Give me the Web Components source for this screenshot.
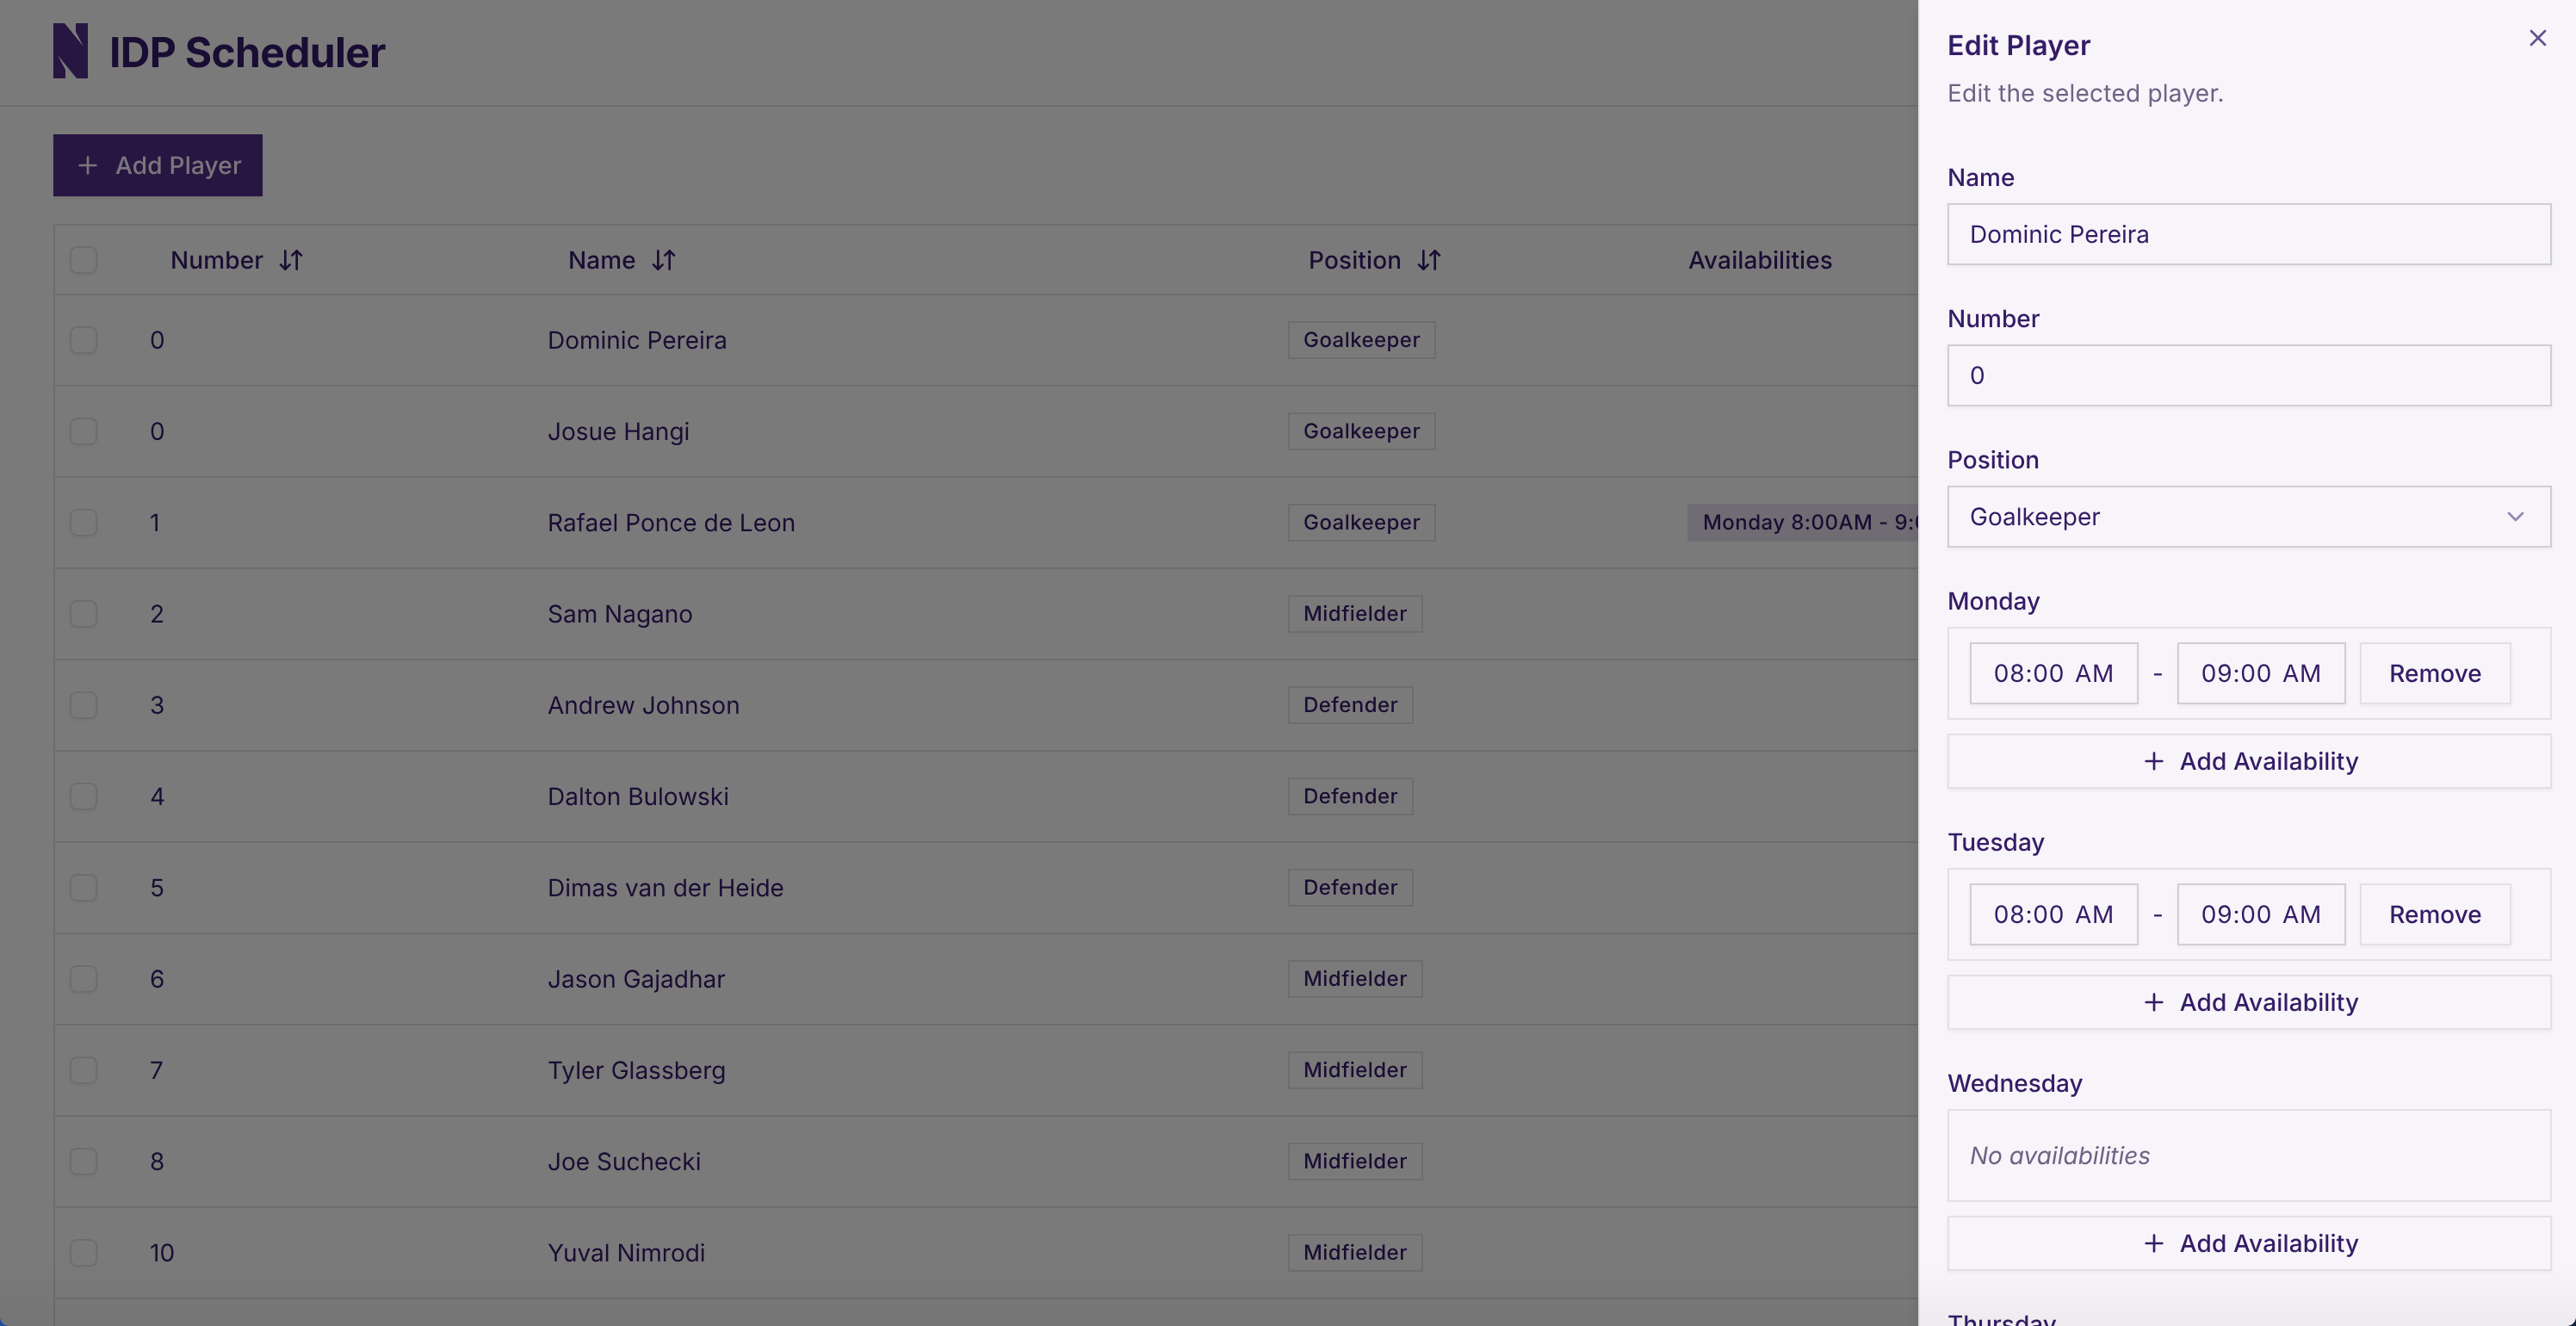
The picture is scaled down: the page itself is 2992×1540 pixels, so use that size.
<!DOCTYPE html>
<html lang="en"><head><meta charset="utf-8"><title>IDP Scheduler</title>
<style>
html,body{margin:0;padding:0;height:100%;overflow:hidden;background:#f6f5f7}
body{font-family:Inter,"Liberation Sans",sans-serif;color:#341c66;font-size:28px;text-rendering:geometricPrecision}
</style></head><body>
<idp-app>
  <app-header slot="header"></app-header>
  <add-button slot="action">Add Player</add-button>
  <player-table slot="table">
    <player-row num="0" name="Dominic Pereira" pos="Goalkeeper"></player-row>
    <player-row num="0" name="Josue Hangi" pos="Goalkeeper"></player-row>
    <player-row num="1" name="Rafael Ponce de Leon" pos="Goalkeeper"><ui-badge soft>Monday 8:00AM - 9:00AM</ui-badge></player-row>
    <player-row num="2" name="Sam Nagano" pos="Midfielder"></player-row>
    <player-row num="3" name="Andrew Johnson" pos="Defender"></player-row>
    <player-row num="4" name="Dalton Bulowski" pos="Defender"></player-row>
    <player-row num="5" name="Dimas van der Heide" pos="Defender"></player-row>
    <player-row num="6" name="Jason Gajadhar" pos="Midfielder"></player-row>
    <player-row num="7" name="Tyler Glassberg" pos="Midfielder"></player-row>
    <player-row num="8" name="Joe Suchecki" pos="Midfielder"></player-row>
    <player-row num="10" name="Yuval Nimrodi" pos="Midfielder"></player-row>
    <player-row></player-row>
  </player-table>
</idp-app>
<dim-overlay></dim-overlay>
<edit-drawer>
  <form-field label="Name"><text-box>Dominic Pereira</text-box></form-field>
  <form-field label="Number"><text-box>0</text-box></form-field>
  <form-field label="Position"><text-box select>Goalkeeper</text-box></form-field>
  <day-field label="Monday"><time-slot start="08:00 AM" end="09:00 AM"></time-slot></day-field>
  <day-field label="Tuesday"><time-slot start="08:00 AM" end="09:00 AM"></time-slot></day-field>
  <day-field label="Wednesday"><empty-note>No availabilities</empty-note></day-field>
  <form-field label="Thursday"></form-field>
</edit-drawer>
<window-edge></window-edge>
<script>
const ICONS={
  plus:'<path d="M5 12h14"/><path d="M12 5v14"/>',
  sort:'<path d="m3 16 4 4 4-4"/><path d="M7 20V4"/><path d="m21 8-4-4-4 4"/><path d="M17 4v16"/>',
  x:'<path d="M18 6 6 18"/><path d="m6 6 12 12"/>',
  chevron:'<path d="m6 9 6 6 6-6"/>'
};
class Base extends HTMLElement{
  constructor(){super();this.attachShadow({mode:'open'})}
  connectedCallback(){this.shadowRoot.innerHTML='<style>'+this.constructor.css+'</style>'+this.view()}
  a(n){return this.getAttribute(n)||''}
  view(){return '<slot></slot>'}
}
function def(name,css,view){
  const C=class extends Base{};
  C.css=css;
  if(view)C.prototype.view=view;
  customElements.define(name,C);
}
def('ui-icon',':host{display:block;width:32px;height:32px;flex:none}svg{display:block;width:32px;height:32px;fill:none;stroke:currentColor;stroke-width:2;stroke-linecap:round;stroke-linejoin:round}',
  function(){return '<svg viewBox="0 0 24 24" aria-hidden="true">'+ICONS[this.a('name')]+'</svg>'});
def('idp-app',':host{display:flex;flex-direction:column;height:1540px;overflow:hidden;will-change:transform}.act{display:flex;flex:none;padding:32px 62px}.tbl{flex:none;padding:0 62px}',
  ()=>'<slot name="header"></slot><div class="act"><slot name="action"></slot></div><div class="tbl"><slot name="table"></slot></div>');
def('app-header',':host{display:flex;flex:none;align-items:center;gap:25px;height:122px;padding:0 62px;border-bottom:2px solid #dbd8df;box-sizing:content-box;color:#321a66}svg{display:block;width:40px;height:64px;fill:#4e2a84;margin-top:-4px}h1{margin:0;font:700 48px/60px Inter,sans-serif;letter-spacing:-.7px}',
  ()=>'<svg viewBox="0 0 40 64" aria-label="Logo"><path d="M0 0H13L35 27L26 10V0H40V64H27L5 37L14 54V64H0Z"/></svg><h1>IDP Scheduler</h1>');
def('add-button',':host{display:flex;align-items:center;height:72px;padding:0 24px;gap:16px;background:#4e2a84;color:#f2eff7;font:500 28px/40px Inter,sans-serif;letter-spacing:.2px;box-sizing:border-box;box-shadow:0 2px 4px rgba(0,0,0,.1)}ui-icon{color:#f2eff7}',
  ()=>'<ui-icon name="plus"></ui-icon><slot></slot>');
const GRID='display:grid;grid-template-columns:94px 462px 860px 464px 1fr;align-items:center;';
def('player-table',`:host{display:block;border:2px solid #dbd8df;border-bottom:0;color:#341a66}
.head{${GRID}height:79px;border-bottom:2px solid #dbd8df;font-weight:500;letter-spacing:.12px}
.c{padding-left:17px;display:flex}.h{display:flex;align-items:center;gap:16px;padding-left:40px}.h.s{padding-left:17px}`,
  ()=>`<div class="head"><div class="c"><ui-check></ui-check></div>
  <div class="h">Number<ui-icon name="sort"></ui-icon></div>
  <div class="h">Name<ui-icon name="sort"></ui-icon></div>
  <div class="h">Position<ui-icon name="sort"></ui-icon></div>
  <div class="h s">Availabilities</div></div><slot></slot>`);
def('ui-check',':host{display:block;width:32px;height:32px;box-sizing:border-box;border:2px solid #dcd9e0;border-radius:8px;box-shadow:0 2px 4px rgba(0,0,0,.05)}',()=>'');
def('ui-badge',`:host{display:inline-flex;align-items:center;height:44px;box-sizing:border-box;padding:0 16px;border:2px solid #dcd9e0;font:500 24px/32px Inter,sans-serif;letter-spacing:.45px;white-space:nowrap}
:host([soft]){background:#dfdae6;border-color:transparent}`);
def('player-row',`:host{${GRID}height:104px;border-bottom:2px solid #dbd8df}
.c{padding-left:17px;display:flex}.p{padding-left:16px}.av{padding-left:16px;display:flex;gap:8px}`,
  function(){
    if(!this.hasAttribute('num'))return '';
    return `<div class="c"><ui-check></ui-check></div><div class="p">${this.a('num')}</div><div class="p">${this.a('name')}</div><div class="p"><ui-badge>${this.a('pos')}</ui-badge></div><div class="av"><slot></slot></div>`;
  });
def('dim-overlay',':host{position:fixed;inset:0;background:rgba(0,0,0,.5)}',()=>'');
def('edit-drawer',`:host{position:fixed;top:0;right:0;bottom:0;width:764px;box-sizing:border-box;padding:32px 28px 0 32px;border-left:2px solid #e6e3ea;background:#f7f5f9;overflow:hidden;color:#341c66;box-shadow:0 10px 15px rgba(0,0,0,.1)}
h2{margin:0;font:600 32px/42px Inter,sans-serif;letter-spacing:.3px}
p{margin:14px 0 64px;font:400 28px/40px Inter,sans-serif;letter-spacing:.24px;color:#6e6285}
.x{position:absolute;top:28px;right:28px;color:#65518f}
.f{display:flex;flex-direction:column;gap:48px}`,
  ()=>'<h2>Edit Player</h2><p>Edit the selected player.</p><ui-icon class="x" name="x"></ui-icon><div class="f"><slot></slot></div>');
def('form-field',':host{display:flex;flex-direction:column;gap:16px}label{font:500 28px/28px Inter,sans-serif;display:block}',
  function(){return `<label>${this.a('label')}</label><slot></slot>`});
def('text-box',`:host{display:flex;align-items:center;justify-content:space-between;height:72px;box-sizing:border-box;padding:0 24px;border:2px solid #d0cdd6;font:400 28px/40px Inter,sans-serif;box-shadow:0 2px 4px rgba(0,0,0,.05)}
ui-icon{opacity:.5}`,
  function(){return '<span><slot></slot></span>'+(this.hasAttribute('select')?'<ui-icon name="chevron"></ui-icon>':'')});
def('day-field',`:host{display:flex;flex-direction:column;gap:16px}label{font:500 28px/28px Inter,sans-serif;display:block}
.box{display:flex;flex-direction:column;justify-content:center;min-height:108px;box-sizing:border-box;padding:16px 24px;border:2px solid #e2dfe8}
.add{display:flex;align-items:center;justify-content:center;gap:14px;height:64px;box-sizing:border-box;border:2px solid #e2dfe8;font:500 28px/40px Inter,sans-serif;letter-spacing:.15px;box-shadow:0 2px 4px rgba(0,0,0,.05)}`,
  function(){return `<label>${this.a('label')}</label><div class="box"><slot></slot></div><div class="add"><ui-icon name="plus"></ui-icon><span>Add Availability</span></div>`});
def('time-slot',`:host{display:flex;align-items:center;gap:16px}
.t{display:flex;align-items:center;justify-content:center;width:196px;height:72px;box-sizing:border-box;border:2px solid #d0cdd6;font:400 28px/40px Inter,sans-serif;letter-spacing:.8px;word-spacing:3px;box-shadow:0 2px 4px rgba(0,0,0,.05)}
.d{width:13px;text-align:center}
.r{display:flex;align-items:center;justify-content:center;width:176px;height:72px;box-sizing:border-box;border:2px solid #e2dfe8;font:500 28px/40px Inter,sans-serif;box-shadow:0 2px 4px rgba(0,0,0,.05)}`,
  function(){return `<div class="t">${this.a('start')}</div><div class="d">-</div><div class="t">${this.a('end')}</div><div class="r">Remove</div>`});
def('empty-note',':host{display:block;font:italic 400 28px/40px Inter,sans-serif;color:#6e6285}');
def('window-edge',`:host{position:fixed;left:0;right:0;bottom:0;height:70px;pointer-events:none;background:linear-gradient(rgba(0,0,0,0),rgba(0,0,0,.04))}
i{position:absolute;bottom:0;width:10px;height:10px}
.l{left:0;background:radial-gradient(circle at 100% 0,transparent 9.5px,#1d4e9e 10px)}
.r{right:0;background:radial-gradient(circle at 0 0,transparent 9.5px,#13233f 10px)}`,
  ()=>'<i class="l"></i><i class="r"></i>');
</script>
</body></html>
